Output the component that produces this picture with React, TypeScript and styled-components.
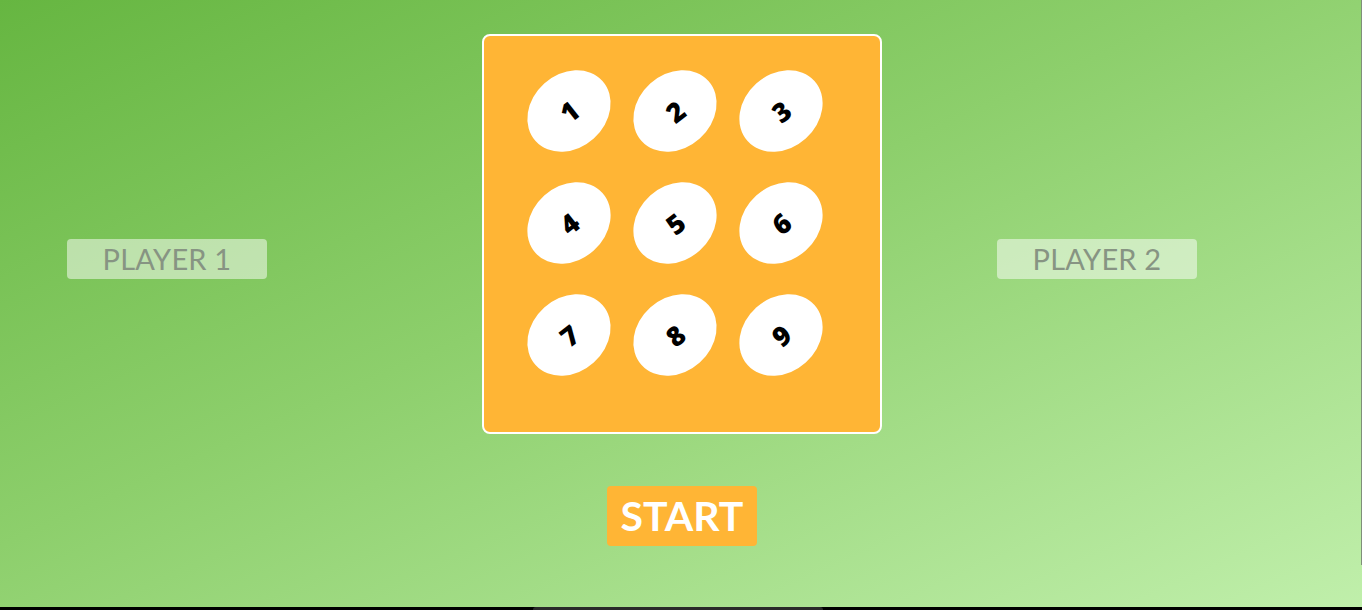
import React from "react";
import styled, { createGlobalStyle } from "styled-components";

const Global = createGlobalStyle`
  html, body { margin: 0; padding: 0; background: #000; }
  body { font-family: Lato, "Noto Sans", sans-serif; overflow: hidden; }
`;

const Page = styled.div`
  position: relative;
  width: 1362px;
  height: 607px;
  background: linear-gradient(to bottom right, #66b641 0%, #8dcf6c 45%, #c0efab 100%);
  display: flex;
  flex-direction: column;
  align-items: flex-start;
`;

const Row = styled.div`
  display: flex;
  align-items: flex-start;
  padding-left: 67px;
  padding-top: 34px;
`;

const PlayerLabel = styled.div<{ $gap: number }>`
  width: 200px;
  height: 40px;
  margin-top: 205px;
  margin-right: ${(p) => p.$gap}px;
  border-radius: 4px;
  background: rgba(255, 255, 255, 0.5);
  color: #879483;
  font-family: Lato, sans-serif;
  font-size: 29px;
  line-height: 40px;
  text-align: center;
  letter-spacing: 0.2px;
`;

const Board = styled.div`
  box-sizing: border-box;
  width: 400px;
  height: 400px;
  margin-right: 115px;
  border: 2px solid #fff;
  border-radius: 8px;
  background: #ffb535;
  padding: 34px 0 0 44px;
  display: grid;
  grid-template-columns: repeat(3, 82px);
  grid-auto-rows: 82px;
  column-gap: 24px;
  row-gap: 30px;
  align-content: start;
`;

const Cell = styled.div`
  display: flex;
  align-items: center;
  justify-content: center;
`;

const Egg = styled.div`
  flex: none;
  width: 90px;
  height: 74px;
  border-radius: 50%;
  background: #fff;
  transform: rotate(-42deg);
  display: flex;
  align-items: center;
  justify-content: center;
  color: #000;
  font-family: "Open Sans", "Noto Sans", sans-serif;
  font-weight: 800;
  font-size: 27px;
  line-height: 1;
`;

const Digit = styled.span`
  transform: rotate(4deg);
  display: inline-block;
`;

const StartRow = styled.div`
  width: 1362px;
  display: flex;
  justify-content: center;
  padding-top: 52px;
`;

const StartButton = styled.button`
  width: 150px;
  height: 60px;
  margin-left: 2px;
  border: none;
  border-radius: 4px;
  background: #ffb535;
  color: #fff;
  font-family: Lato, sans-serif;
  font-weight: 700;
  font-size: 41px;
  line-height: 60px;
  padding: 0;
  cursor: pointer;
`;

const ScrollLine = styled.div`
  position: absolute;
  right: 0;
  top: 0;
  width: 1px;
  height: 565px;
  background: #7f8f7a;
`;

const BottomPill = styled.div`
  position: fixed;
  left: 533px;
  top: 607px;
  width: 290px;
  height: 4px;
  border-radius: 3px 3px 0 0;
  background: #2a2a2a;
`;

export default function App() {
  const nums = [1, 2, 3, 4, 5, 6, 7, 8, 9];
  return (
    <>
      <Global />
      <Page>
        <Row>
          <PlayerLabel $gap={215}>PLAYER 1</PlayerLabel>
          <Board>
            {nums.map((n) => (
              <Cell key={n}>
                <Egg>
                  <Digit>{n}</Digit>
                </Egg>
              </Cell>
            ))}
          </Board>
          <PlayerLabel $gap={0}>PLAYER 2</PlayerLabel>
        </Row>
        <StartRow>
          <StartButton>START</StartButton>
        </StartRow>
        <ScrollLine />
      </Page>
      <BottomPill />
    </>
  );
}
